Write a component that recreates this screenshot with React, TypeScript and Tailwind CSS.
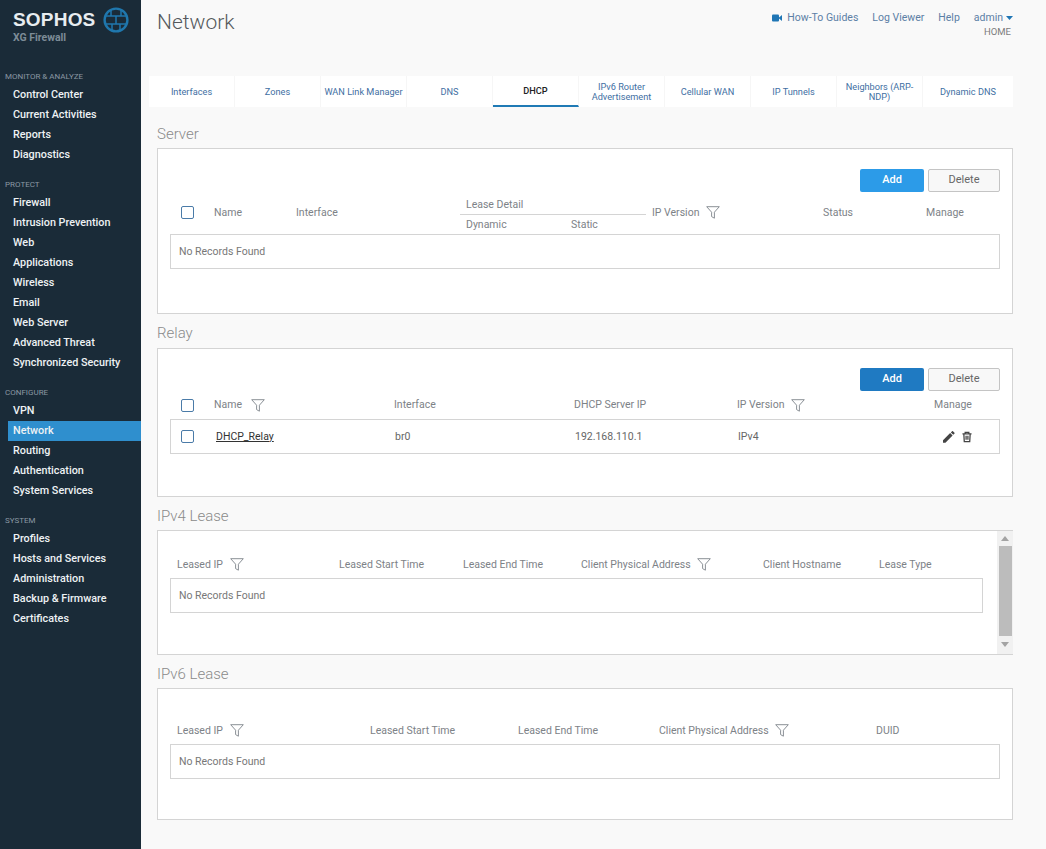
import React from "react";

const FONT = "font-['Roboto','Liberation_Sans',sans-serif]";

const NAV = [
  { title: "MONITOR & ANALYZE", items: ["Control Center", "Current Activities", "Reports", "Diagnostics"] },
  { title: "PROTECT", items: ["Firewall", "Intrusion Prevention", "Web", "Applications", "Wireless", "Email", "Web Server", "Advanced Threat", "Synchronized Security"] },
  { title: "CONFIGURE", items: ["VPN", "Network", "Routing", "Authentication", "System Services"] },
  { title: "SYSTEM", items: ["Profiles", "Hosts and Services", "Administration", "Backup & Firmware", "Certificates"] },
];

const TABS = ["Interfaces", "Zones", "WAN Link Manager", "DNS", "DHCP", "IPv6 Router Advertisement", "Cellular WAN", "IP Tunnels", "Neighbors (ARP-NDP)", "Dynamic DNS"];

function Funnel() {
  return (
    <svg width="14" height="13" viewBox="0 0 14 13" fill="none" stroke="#8a9096" strokeWidth="1" className="shrink-0">
      <path d="M0.7 0.7H13.3L8.4 6.2V12.2L5.6 10.6V6.2Z" />
    </svg>
  );
}

function Logo() {
  return (
    <svg width="26" height="26" viewBox="0 0 26 26" fill="none" stroke="#1f77ad" strokeWidth="2.4">
      <circle cx="13" cy="13" r="11.4" />
      <path d="M2 9H24M2 17H24M8 2.5V9M18 2.5V9M13 9V17M9 17V23.5M17 17V23.5" strokeWidth="1.5" />
    </svg>
  );
}

function Check() {
  return <span className="block w-[13px] h-[13px] border-[1.5px] border-[#4a7ba8] rounded-[2px] bg-white shrink-0" />;
}

function Buttons({ dark }: { dark?: boolean }) {
  return (
    <div className="flex justify-end gap-1 pr-3">
      <button className={`w-16 h-[23px] rounded-[2px] text-white text-[11px] font-medium ${dark ? "bg-[#1f7ac2]" : "bg-[#2c9be8]"}`}>Add</button>
      <button className="w-[72px] h-[23px] rounded-[2px] border border-[#c4c4c4] bg-[#f8f8f8] text-[#666] text-[11px]">Delete</button>
    </div>
  );
}

function Cell({ w, label, filter, gap = "gap-[7px]" }: { w: number; label: string; filter?: boolean; gap?: string }) {
  return (
    <div style={{ width: w }} className={`flex items-center ${gap} text-[10.5px] text-[#7d8287] shrink-0`}>
      <span className="whitespace-nowrap">{label}</span>
      {filter && <Funnel />}
    </div>
  );
}

function Empty({ width = "w-[830px]" }: { width?: string }) {
  return (
    <div className={`${width} ml-[12px] h-[35px] border border-[#d4d4d4] flex items-center pl-2 text-[10.5px] text-[#777]`}>
      No Records Found
    </div>
  );
}

function Heading({ children }: { children: React.ReactNode }) {
  return <h2 className="h-[20px] text-[15px] leading-[20px] text-[#8a8a8a] font-light">{children}</h2>;
}

export default function App() {
  return (
    <div className={`${FONT} w-[1046px] h-[849px] flex bg-[#f9f9f9] overflow-hidden`}>
      <aside className="w-[141px] shrink-0 bg-[#1a2b38] flex flex-col">
        <div className="h-[69px] pl-[13px] pt-[7px]">
          <div className="flex items-center gap-[7px]">
            <span className="text-[#e8edf0] text-[19px] leading-[24px] font-bold tracking-[0.2px] font-['Liberation_Sans',sans-serif]">SOPHOS</span>
            <Logo />
          </div>
          <div className="text-[#7d8c97] text-[10.5px] font-bold leading-[12px] -mt-[1px]">XG Firewall</div>
        </div>
        {NAV.map((g) => (
          <div key={g.title} className="mb-[12px]">
            <div className="h-[16px] pl-[5px] text-[8px] leading-[15px] text-[#8a98a3]">{g.title}</div>
            {g.items.map((it) => (
              <div
                key={it}
                className={`h-[20px] ml-[8px] pl-[5px] text-[10.8px] font-medium leading-[20px] text-[#eef2f4] whitespace-nowrap ${it === "Network" ? "bg-[#2f8fce]" : ""}`}
              >
                {it}
              </div>
            ))}
          </div>
        ))}
      </aside>
      <main className="flex-1 min-w-0">
        <header className="h-[76px] flex justify-between pl-4 pr-[33px] pt-[9px]">
          <h1 className="text-[21px] leading-[26px] font-light text-[#55595d]">Network</h1>
          <div className="flex flex-col items-end pt-[1px]">
            <div className="flex items-center gap-[14px] text-[10.5px] text-[#5c7fa6] h-4">
              <span className="flex items-center gap-[5px]">
                <svg width="10" height="8" viewBox="0 0 10 8" fill="#1f76b5"><rect x="0" y="0.5" width="7" height="7" rx="1" /><path d="M7 3.5L10 1V7L7 4.5Z" /></svg>
                How-To Guides
              </span>
              <span>Log Viewer</span>
              <span>Help</span>
              <span className="flex items-center gap-[3px]">
                admin
                <svg width="7" height="4" viewBox="0 0 7 4" fill="#1f76b5"><path d="M0 0H7L3.5 4Z" /></svg>
              </span>
            </div>
            <div className="mr-[2px] text-[9.5px] leading-[12px] text-[#7c7c7c]">HOME</div>
          </div>
        </header>

        <div className="ml-2 w-[864px] h-[31px] flex bg-white">
          {TABS.map((t) => (
            <div
              key={t}
              className={`w-[86px] last:flex-1 flex items-center justify-center text-center text-[9.2px] leading-[10px] border-r border-[#f6f6f6] last:border-r-0 ${
                t === "DHCP" ? "border-b-2 border-b-[#1f7ab5] text-[#222] font-medium" : "text-[#3f6fa3]"
              }`}
            >
              {t}
            </div>
          ))}
        </div>

        <div className="ml-4 w-[856px] pt-[17px]">
          <Heading>Server</Heading>
          <section className="mt-[4px] h-[166px] border border-[#d4d4d4] bg-white pt-[20px]">
            <Buttons />
            <div className="h-[42px] flex items-center">
              <div className="w-[56px] pl-[23px] shrink-0 -mt-[2px]"><Check /></div>
              <Cell w={82} label="Name" />
              <div className="w-[170px] shrink-0 -mt-[1px]"><Cell w={170} label="Interface" /></div>
              <div className="w-[186px] shrink-0 text-[10.5px] text-[#7d8287] -ml-[6px]">
                <div className="h-[21px] pl-[6px] pt-[3px] border-b border-[#d4d4d4]">Lease Detail</div>
                <div className="flex pl-[6px] pt-[2px]"><span className="w-[105px]">Dynamic</span><span>Static</span></div>
              </div>
              <div className="ml-[6px] w-[171px] shrink-0 -mt-[1px]"><Cell w={171} label="IP Version" filter /></div>
              <Cell w={103} label="Status" />
              <Cell w={60} label="Manage" />
            </div>
            <Empty />
          </section>

          <div className="mt-[9px]"><Heading>Relay</Heading></div>
          <section className="mt-[5px] h-[149px] border border-[#d4d4d4] bg-white pt-[19px]">
            <Buttons dark />
            <div className="h-[28px] flex items-center">
              <div className="w-[56px] pl-[23px] shrink-0"><Check /></div>
              <Cell w={180} label="Name" filter gap="gap-[9px]" />
              <Cell w={180} label="Interface" />
              <Cell w={163} label="DHCP Server IP" />
              <Cell w={197} label="IP Version" filter />
              <Cell w={60} label="Manage" />
            </div>
            <div className="w-[830px] ml-[12px] h-[35px] border border-[#d4d4d4] flex items-center text-[10.5px] text-[#666]">
              <div className="w-[45px] pl-[10px] shrink-0"><Check /></div>
              <a className="w-[179px] shrink-0 underline text-[#333]">DHCP_Relay</a>
              <span className="w-[180px] shrink-0">br0</span>
              <span className="w-[163px] shrink-0">192.168.110.1</span>
              <span className="w-[205px] shrink-0">IPv4</span>
              <svg width="12" height="12" viewBox="3 3 18.5 18.5" fill="#444"><path d="M3 17.25V21h3.75L17.8 9.94l-3.75-3.75L3 17.25zM20.7 7.04a1 1 0 000-1.41l-2.34-2.34a1 1 0 00-1.41 0l-1.83 1.83 3.75 3.75 1.83-1.83z" /></svg>
              <svg className="ml-[7px]" width="10" height="12" viewBox="0 0 22 24" fill="none" stroke="#444" strokeWidth="2.8"><path d="M1 5H21M7 5V2H15V5M4 5L5 22H17L18 5M9 9V18M13 9V18" /></svg>
            </div>
          </section>

          <div className="mt-[9px]"><Heading>IPv4 Lease</Heading></div>
          <section className="mt-[4px] h-[125px] border border-[#d4d4d4] bg-white flex">
            <div className="flex-1 min-w-0 pt-[20px]">
              <div className="h-[27px] flex items-center pl-[19px]">
                <Cell w={162} label="Leased IP" filter />
                <Cell w={124} label="Leased Start Time" />
                <Cell w={118} label="Leased End Time" />
                <Cell w={182} label="Client Physical Address" filter gap="gap-[6px]" />
                <Cell w={116} label="Client Hostname" />
                <Cell w={60} label="Lease Type" />
              </div>
              <Empty width="w-[813px]" />
            </div>
            <div className="w-[16px] -mr-px shrink-0 bg-[#f1f1f1] flex flex-col items-center pt-[4px]">
              <svg width="8" height="5" viewBox="0 0 8 5" fill="#a3a3a3" className="mb-[5px] mt-[1px]"><path d="M4 0L8 5H0Z" /></svg>
              <div className="w-[13px] h-[90px] bg-[#bcbcbc]" />
              <svg width="8" height="5" viewBox="0 0 8 5" fill="#a3a3a3" className="mt-[6px]"><path d="M0 0H8L4 5Z" /></svg>
            </div>
          </section>

          <div className="mt-[9px]"><Heading>IPv6 Lease</Heading></div>
          <section className="mt-[4px] h-[132px] border border-[#d4d4d4] bg-white pt-[28px]">
            <div className="h-[27px] flex items-center pl-[19px]">
              <Cell w={193} label="Leased IP" filter />
              <Cell w={148} label="Leased Start Time" />
              <Cell w={141} label="Leased End Time" />
              <Cell w={217} label="Client Physical Address" filter gap="gap-[6px]" />
              <Cell w={60} label="DUID" />
            </div>
            <Empty />
          </section>
        </div>
      </main>
    </div>
  );
}
